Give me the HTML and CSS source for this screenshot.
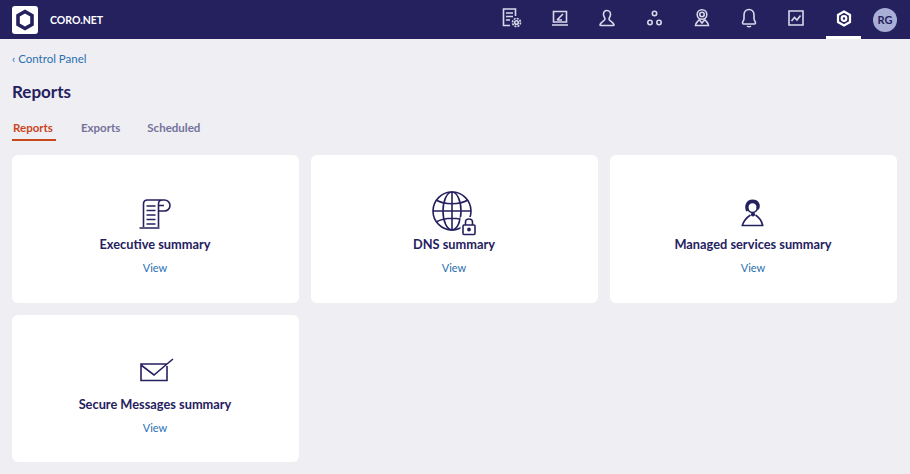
FILE: index.html
```html
<!DOCTYPE html>
<html lang="en">
<head>
    <meta charset="UTF-8">
    <meta name="viewport" content="width=device-width, initial-scale=1.0">
    <title>Reports</title>
    <link rel="stylesheet" href="styles.css">
</head>
<body>
    <!-- Top bar -->
    <header class="topbar">
        <div class="brand">
            <div class="logo">
                <svg width="18" height="22" viewBox="0 0 18 22"><path d="M9 2.500 L16 6.500 V15.500 L9 19.500 L2 15.500 V6.500 Z" fill="none" stroke="#25215f" stroke-width="3.6"/></svg>
            </div>
            <span class="brand-name">CORO.NET</span>
        </div>
        <nav class="nav">
            <a class="nav-item">
                <svg width="22" height="22" viewBox="0 0 22 22" class="nav-icon"><path d="M9 18.500H2.500V2H14.500V9M5 6H12M5 9.500H12M5 13H9"/><circle cx="15.500" cy="15.500" r="1.800"/><circle cx="15.500" cy="15.500" r="4" stroke-dasharray="2 1.100"/></svg>
            </a>
            <a class="nav-item">
                <svg width="22" height="22" viewBox="0 0 22 22" class="nav-icon"><path d="M4.500 4.500H17.500V15H4.500ZM3 18H19M8 13L14 7M8 13H13"/></svg>
            </a>
            <a class="nav-item">
                <svg width="22" height="22" viewBox="0 0 22 22" class="nav-icon"><path d="M11 3.500C8.500 3.500 7.500 5.500 7.500 7.500C7.500 9.500 9 10.500 9 12C9 14 4.500 15 4 18C4 18.500 4.500 18.500 5 18.500H17C17.500 18.500 18 18.500 18 18C17.500 15 13 14 13 12C13 10.500 14.500 9.500 14.500 7.500C14.500 5.500 13.500 3.500 11 3.500Z"/></svg>
            </a>
            <a class="nav-item">
                <svg width="22" height="22" viewBox="0 0 22 22" class="nav-icon"><circle cx="11.500" cy="6.500" r="2.200"/><circle cx="7" cy="15.500" r="2.200"/><circle cx="16" cy="15.500" r="2.200"/></svg>
            </a>
            <a class="nav-item">
                <svg width="22" height="22" viewBox="0 0 22 22" class="nav-icon"><circle cx="11" cy="7.500" r="4.800"/><circle cx="11" cy="7.500" r="2.200"/><path d="M8 12.500C7 15 4.500 15.500 4.500 18.500H17.500C17.500 15.500 15 15 14 12.500M8 12.500L11 16L14 12.500"/></svg>
            </a>
            <a class="nav-item">
                <svg width="22" height="22" viewBox="0 0 22 22" class="nav-icon"><path d="M11 2.500C8 2.500 6 5 6 8V11.500C6 13.500 4.500 14.500 4.500 15.800C4.500 16.600 5 17 5.500 17H16.500C17 17 17.500 16.600 17.500 15.800C17.500 14.500 16 13.500 16 11.500V8C16 5 14 2.500 11 2.500ZM9 19C10 19.800 12 19.800 13 19"/></svg>
            </a>
            <a class="nav-item">
                <svg width="22" height="22" viewBox="0 0 22 22" class="nav-icon"><path d="M4 4H18V18H4ZM6.500 14L9.500 10.500L12 13L15.500 8.500"/></svg>
            </a>
            <a class="nav-item active">
                <svg width="22" height="22" viewBox="0 0 22 22" class="nav-icon bold"><path d="M11 4.500L17 8V15L11 18.500L5 15V8Z"/><circle cx="11" cy="11.500" r="2.300"/></svg>
            </a>
        </nav>
        <div class="avatar">RG</div>
    </header>

    <main class="content">
        <a class="back-link">‹ Control Panel</a>
        <h1 class="title">Reports</h1>

        <!-- Tabs -->
        <div class="tabs">
            <a class="tab active">Reports</a>
            <a class="tab">Exports</a>
            <a class="tab">Scheduled</a>
        </div>

        <!-- Report cards -->
        <div class="cards">
            <div class="card">
                <svg width="46" height="46" viewBox="0 0 46 46" class="card-icon"><path d="M7.500 37H27.500M11.500 36V13C11.500 10.500 13 9 15.500 9H32.500C35.500 9 38 11.500 38 14.500C38 17.500 35.500 20 32.500 20H26.500M26.500 36V13C26.500 10.500 28 9 30.500 9M32 14.500H27M14.500 15H23.500M14.500 19.500H23.500M14.500 24H23.500M14.500 28.500H23.500M14.500 33H23.500"/></svg>
                <h2 class="card-title">Executive summary</h2>
                <a class="card-link">View</a>
            </div>
            <div class="card">
                <svg width="46" height="46" viewBox="0 0 46 46" class="card-icon globe"><circle cx="21" cy="20" r="19"/><ellipse cx="21" cy="20" rx="9" ry="19"/><path d="M21 1V39M2 20H40M5 9C14 14 28 14 37 9M5 31C14 26 28 26 37 31"/><rect x="29.500" y="26" width="16" height="20" class="mask"/><rect x="32" y="34" width="12" height="9.500" rx="1" class="lock"/><path d="M34.500 34V31C34.500 27 41.500 27 41.500 31V34"/><circle cx="38" cy="38.500" r="1.100" class="dot"/></svg>
                <h2 class="card-title">DNS summary</h2>
                <a class="card-link">View</a>
            </div>
            <div class="card">
                <svg width="46" height="46" viewBox="0 0 46 46" class="card-icon"><path d="M11.500 34.500H33.500M12.500 34C14 29 17.500 26 20.500 24M25.500 24C28.500 26 31.500 29 32.500 34"/><circle cx="22.500" cy="16.500" r="5"/><path d="M17.500 20C15.500 15 17.500 10 22.500 10C27.500 10 29.500 14 27.500 18" class="hair"/><circle cx="23" cy="23.500" r="1.300" class="dot"/></svg>
                <h2 class="card-title">Managed services summary</h2>
                <a class="card-link">View</a>
            </div>
            <div class="card">
                <svg width="46" height="46" viewBox="0 0 46 46" class="card-icon"><path d="M35 13H9V29.500H35V15M9 14L22 24L35 13L41 8"/></svg>
                <h2 class="card-title">Secure Messages summary</h2>
                <a class="card-link">View</a>
            </div>
        </div>
    </main>
</body>
</html>
```

FILE: styles.css
```css
/* Global Reset */
* {
    margin: 0;
    padding: 0;
    box-sizing: border-box;
}

body {
    font-family: 'Lato', sans-serif;
    background: #efeef3;
    color: #25215f;
    min-height: 100vh;
}

/* Top bar */
.topbar {
    display: flex;
    align-items: center;
    height: 39px;
    background: #25215f;
    padding: 0 13px 0 12px;
}

.brand {
    display: flex;
    align-items: center;
    gap: 12px;
}

.logo {
    display: flex;
    align-items: center;
    justify-content: center;
    width: 26px;
    height: 28px;
    background: #fff;
    border-radius: 3px;
}

.brand-name {
    font-size: 10.5px;
    font-weight: 700;
    color: #fff;
}

.nav {
    display: flex;
    gap: 12.3px;
    margin-left: auto;
    margin-right: 12px;
}

.nav-item {
    display: flex;
    align-items: center;
    justify-content: center;
    width: 35px;
    height: 39px;
    border-bottom: 3px solid transparent;
}

.nav-item.active {
    border-bottom-color: #fff;
}

.nav-icon {
    fill: none;
    stroke: #d9d8ea;
    stroke-width: 1.6;
}

.nav-icon.bold {
    stroke: #fff;
    stroke-width: 2.2;
}

.avatar {
    display: flex;
    align-items: center;
    justify-content: center;
    width: 24px;
    height: 24px;
    border-radius: 50%;
    background: #a9aed6;
    color: #25215f;
    font-size: 11px;
    font-weight: 700;
}

/* Page content */
.content {
    padding: 12px 13px 12px 12px;
}

.back-link {
    display: block;
    font-size: 11.5px;
    line-height: 16px;
    color: #2a6fb0;
}

.title {
    font-size: 17px;
    font-weight: 700;
    line-height: 24px;
    margin-top: 13px;
}

/* Tabs */
.tabs {
    display: flex;
    gap: 27px;
    margin-top: 16px;
    height: 35px;
}

.tab {
    font-size: 11.5px;
    font-weight: 700;
    line-height: 16px;
    color: #73729b;
}

.tab.active {
    color: #c8471c;
    border-bottom: 2px solid #c8471c;
    height: 21px;
    margin-right: -2px;
    padding: 0 3px 0 1px;
}

/* Report cards */
.cards {
    display: grid;
    grid-template-columns: repeat(3, 287px);
    grid-auto-rows: 147.5px;
    gap: 12px;
}

.card {
    display: flex;
    flex-direction: column;
    align-items: center;
    padding: 36px 1px 0 0;
    background: #fff;
    border-radius: 6px;
}

.card-icon {
    fill: none;
    stroke: #25215f;
    stroke-width: 1.6;
}

.card-icon .mask {
    fill: #fff;
    stroke: none;
}

.card-icon .lock {
    fill: #fff;
}

.card-icon .dot {
    fill: #25215f;
}

.card-icon .hair {
    stroke-width: 3;
}

.card-title {
    font-size: 12.8px;
    font-weight: 700;
    line-height: 14px;
}

.card-link {
    font-size: 11px;
    line-height: 16px;
    margin-top: 9px;
    color: #2a6fb0;
}
```
